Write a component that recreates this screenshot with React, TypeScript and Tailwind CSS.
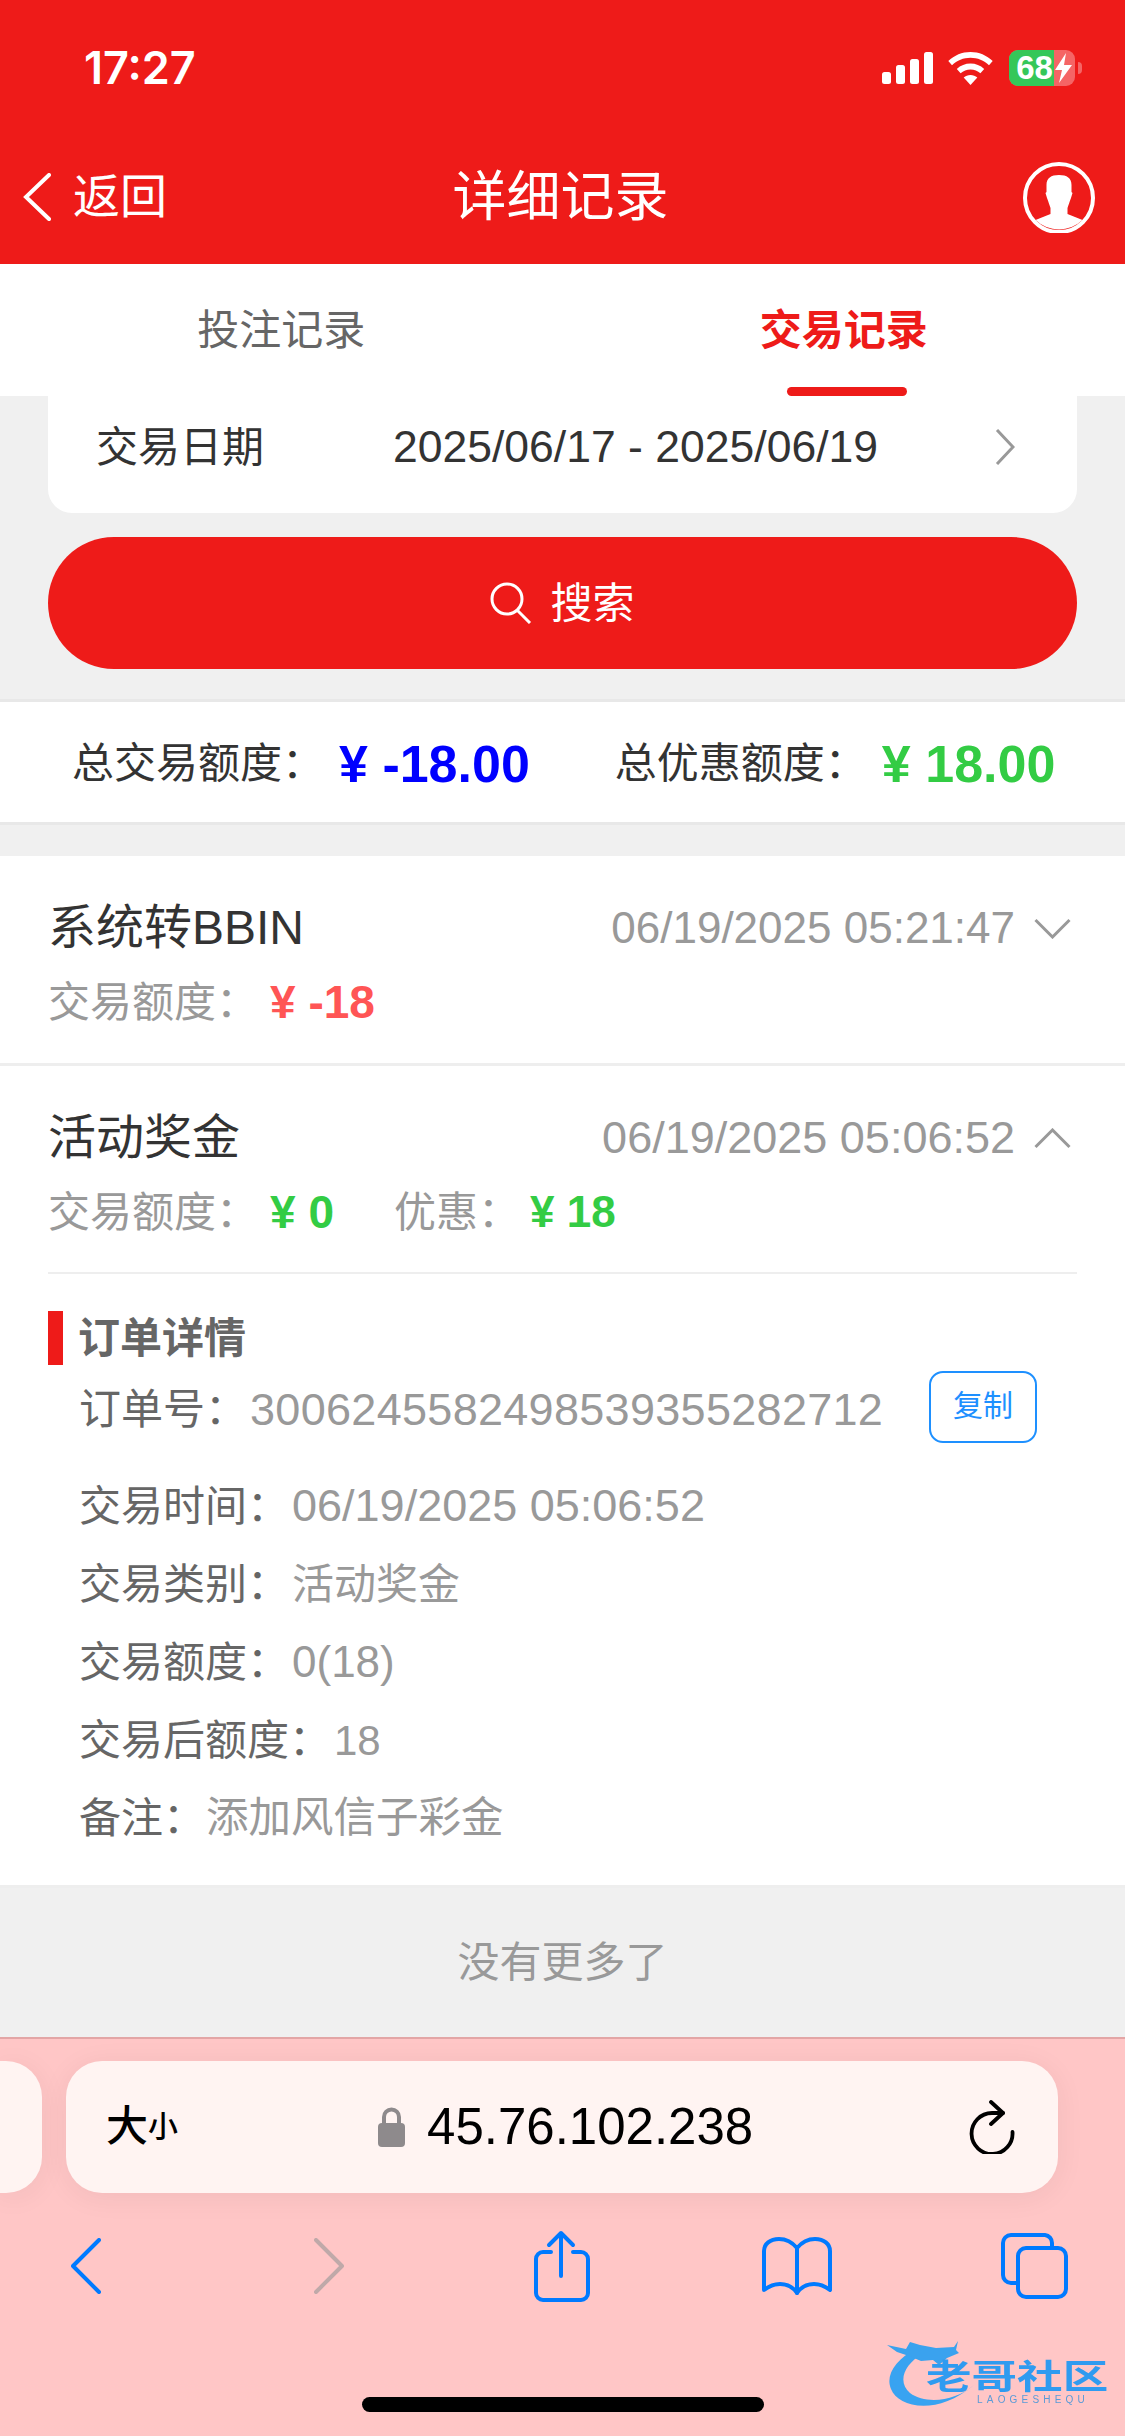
// App.tsx - mobile transaction record page inside the Safari chrome
const details = [
  { label: '交易时间：', value: '06/19/2025 05:06:52', size: 'text-[45px]', gap: 'ml-[3px]' },
  { label: '交易类别：', value: '活动奖金', size: 'text-[42px]', gap: 'ml-[3px]' },
  { label: '交易额度：', value: '0(18)', size: 'text-[44px]', gap: 'ml-[3px]' },
  { label: '交易后额度：', value: '18', size: 'text-[42px]', gap: 'ml-[3px]' },
  { label: '备注：', value: '添加风信子彩金', size: 'text-[42.500px]', gap: 'ml-[1px]' },
];

function StatusIcons() {
  return (
    <div className="flex items-center">
      <svg width="51" height="32" viewBox="0 0 51 32" fill="#fff">
        <rect x="0" y="20" width="9" height="12" rx="2.5" />
        <rect x="14" y="13" width="9" height="19" rx="2.5" />
        <rect x="28" y="7" width="9" height="25" rx="2.5" />
        <rect x="42" y="0" width="9" height="32" rx="2.5" />
      </svg>
      <svg className="ml-[15px]" width="45" height="33" viewBox="0 0 45 33" fill="#fff">
        <path d="M22.5 0C14 0 6.400 3.300 0.300 9l3.700 4.300C9 8.500 15.500 5.800 22.500 5.800s13.500 2.700 18.500 7.500L44.700 9C38.600 3.300 31 0 22.500 0z" />
        <path d="M22.500 11.500c-5.200 0-9.900 2-13.700 5.400l3.800 4.300c2.700-2.400 6.100-3.800 9.900-3.800s7.200 1.400 9.900 3.800l3.800-4.300c-3.800-3.400-8.500-5.400-13.700-5.400z" />
        <path d="M22.500 23c-2.600 0-5 1-6.800 2.600l6.800 7.400 6.800-7.400C27.500 24 25.100 23 22.500 23z" />
      </svg>
      <div className="ml-[16px] flex h-[36px] w-[66px] items-center overflow-hidden rounded-[9px] bg-[#f56565]">
        <div className="flex h-full w-[45px] shrink-0 items-center justify-center bg-[#35c759] pl-[6px] text-[33px] font-bold text-white">
          68
        </div>
        <svg width="21" height="30" viewBox="0 0 21 30" fill="#fff">
          <path d="M12 0 1 17h7l-3 13 13-18h-8z" />
        </svg>
      </div>
      <div className="ml-[3px] h-[12px] w-[4px] rounded-r-[4px] bg-[#f56565]" />
    </div>
  );
}

function Avatar() {
  return (
    <svg width="72" height="71" viewBox="0 0 72 71">
      <circle cx="36" cy="36" r="34" fill="none" stroke="#fff" strokeWidth="4" />
      <path
        fill="#fff"
        d="M36 13c-8 0-12.500 3-12.500 10v7l-1 1 1.500 5c1.500 4 2.500 7 3.500 10v6l-15 6A34 34 0 0 0 59.500 58l-15-6v-6c1-3 2-6 3.500-10l1.500-5-1-1v-7c0-7-4.500-10-12.500-10z"
      />
    </svg>
  );
}

function Chevron({ up }: { up?: boolean }) {
  return (
    <svg width="37" height="21" viewBox="0 0 37 21" fill="none" stroke="#999" strokeWidth="3" className={up ? 'rotate-180' : ''}>
      <path d="M1.500 2 18.500 19 35.500 2" />
    </svg>
  );
}

function Logo() {
  return (
    <div className="absolute right-[17px] top-[296px] h-[76px] w-[222px] blur-[0.7px]">
      <svg className="absolute left-0 top-0" width="100" height="76" viewBox="0 0 100 76" fill="none">
        <path d="M30 14C10 24-1 40 5 54c7 18 45 28 83-4-18 16-48 20-64 8C12 48 16 30 38 18z" fill="#38a3f1" />
        <path d="M1 10l19 4 4-7 10 3 16 3 18-1 4-6-2 9 3 3-12 5-8 7-6-5-12 1-12-5-12-4z" fill="#3aa2ee" />
      </svg>
      <div className="absolute left-[40px] top-[27px] origin-left scale-x-[1.34] whitespace-nowrap text-[34px] font-bold leading-[30px] text-[#2f9bf0]">
        老哥社区
      </div>
      <div className="absolute left-[91px] top-[60px] whitespace-nowrap text-[10px] leading-[10px] tracking-[4.200px] text-[#5a9bd8]">
        LAOGESHEQU
      </div>
    </div>
  );
}

export default function App() {
  return (
    <div className="relative flex h-[2436px] w-[1125px] flex-col overflow-hidden bg-[#f0f0f0] text-[42px] text-[#333] [font-family:'Liberation_Sans','Noto_Sans_CJK_SC',sans-serif]">
      {/* status bar + nav */}
      <header className="h-[264px] bg-[#ee1b19] text-white">
        <div className="flex h-[136px] items-center justify-between pl-[84px] pr-[43px]">
          <span className="text-[45px] font-semibold [font-family:Inter,sans-serif]">17:27</span>
          <StatusIcons />
        </div>
        <div className="grid h-[122px] grid-cols-[1fr_auto_1fr] items-center pl-[23px] pr-[30px]">
          <div className="flex items-center">
            <svg width="28" height="48" viewBox="0 0 28 48" fill="none" stroke="#fff" strokeWidth="4" strokeLinecap="round">
              <path d="M26 2 3 24l23 22" />
            </svg>
            <span className="ml-[22px] text-[47px]">返回</span>
          </div>
          <span className="pl-[3px] text-[54px]">详细记录</span>
          <div className="flex justify-end">
            <Avatar />
          </div>
        </div>
      </header>

      {/* tabs */}
      <div className="flex h-[132px] bg-white">
        <div className="flex flex-1 items-center justify-center text-[#666]">投注记录</div>
        <div className="relative flex flex-1 items-center justify-center font-bold text-[#ee1b19]">
          交易记录
          <div className="absolute bottom-0 left-[224px] h-[9px] w-[120px] rounded-full bg-[#ee1b19]" />
        </div>
      </div>

      {/* date filter and search */}
      <div className="px-[48px]">
        <div className="flex h-[117px] items-center justify-between rounded-b-[24px] bg-white pb-[15px] pl-[48px] pr-[62px]">
          <span>交易日期</span>
          <span className="ml-[12px] text-[44.500px]">2025/06/17 - 2025/06/19</span>
          <svg width="20" height="36" viewBox="0 0 20 36" fill="none" stroke="#999" strokeWidth="3">
            <path d="M2 1l16 17L2 35" />
          </svg>
        </div>
        <button className="mt-[24px] flex h-[132px] w-full items-center justify-center rounded-full bg-[#ee1b19] text-white">
          <svg width="42" height="42" viewBox="0 0 42 42" fill="none" stroke="#fff" strokeWidth="3">
            <circle cx="17" cy="17" r="15" />
            <path d="M27 28l13 13" />
          </svg>
          <span className="ml-[18px]">搜索</span>
        </button>
      </div>

      {/* totals */}
      <div className="mt-[30px] flex h-[126px] items-center border-y-[3px] border-[#e8e8e8] bg-white pl-[72px] pt-[3px]">
        <span>总交易额度：</span>
        <span className="ml-[15px] text-[52px] font-bold text-[#0000ff]">¥ -18.00</span>
        <span className="ml-[85px]">总优惠额度：</span>
        <span className="ml-[15px] text-[52px] font-bold text-[#33cc44]">¥ 18.00</span>
      </div>

      {/* first record */}
      <div className="mt-[31px] h-[210px] border-b-[3px] border-[#eeeeee] bg-white px-[48px] pt-[42px]">
        <div className="flex h-[60px] items-center">
          <span className="text-[48px]">系统转BBIN</span>
          <span className="ml-auto text-[44px] text-[#999]">06/19/2025 05:21:47</span>
          <span className="ml-[19px] mr-[6px]">
            <Chevron />
          </span>
        </div>
        <div className="mt-[14px] flex h-[60px] items-center text-[#999]">
          <span>交易额度：</span>
          <span className="ml-[12px] text-[46px] font-bold text-[#ff5555]">¥ -18</span>
        </div>
      </div>

      {/* second record, expanded */}
      <div className="border-b-[3px] border-[#eeeeee] bg-white px-[48px] pt-[42px] pb-[28px]">
        <div className="flex h-[60px] items-center">
          <span className="text-[48px]">活动奖金</span>
          <span className="ml-auto text-[45px] text-[#999]">06/19/2025 05:06:52</span>
          <span className="ml-[19px] mr-[6px]">
            <Chevron up />
          </span>
        </div>
        <div className="mt-[14px] flex h-[60px] items-center text-[#999]">
          <span>交易额度：</span>
          <span className="ml-[12px] text-[46px] font-bold text-[#33cc44]">¥ 0</span>
          <span className="ml-[60px]">优惠：</span>
          <span className="ml-[10px] text-[44px] font-bold text-[#33cc44]">¥ 18</span>
        </div>
        <div className="mt-[30px] h-[2px] bg-[#eeeeee]" />

        <div className="mt-[37px] flex h-[54px] items-center border-l-[15px] border-[#ee1b19] pl-[15px] font-bold text-[#666]">
          订单详情
        </div>

        <div className="mt-[6px] flex pl-[31px] pr-[40px]">
          <span className="leading-[78px] text-[#666]">订单号：</span>
          <span className="ml-[3px] text-[45px] leading-[78px] tracking-[0.300px] text-[#999]">3006245582498539355282712</span>
          <button className="ml-auto flex h-[72px] w-[108px] items-center justify-center rounded-[14px] border-2 border-[#1e90ff] pb-[3px] text-[30px] text-[#1e90ff]">
            复制
          </button>
        </div>

        <div className="mt-[18px] pl-[31px]">
          {details.map((row) => (
            <div key={row.label} className="flex h-[78px] items-center">
              <span className="text-[#666]">{row.label}</span>
              <span className={`${row.gap} ${row.size} text-[#999]`}>{row.value}</span>
            </div>
          ))}
        </div>
      </div>

      <div className="flex flex-1 items-center justify-center text-[#999]">没有更多了</div>

      {/* Safari toolbar */}
      <div className="relative h-[399px] border-t-2 border-[#e3a6a6] bg-[#ffc6c6] pt-[22px]">
        <div className="flex h-[132px]">
          <div className="w-[42px] rounded-r-[36px] bg-[#fff4f2] shadow-[0_4px_30px_rgba(0,0,0,0.06)]" />
          <div className="ml-[24px] flex w-[992px] items-center rounded-[36px] bg-[#fff4f2] pl-[40px] pr-[43px] text-black shadow-[0_4px_30px_rgba(0,0,0,0.06)]">
            <span className="text-[42px] font-medium leading-none">大</span>
            <span className="text-[30px] font-medium leading-none">小</span>
            <svg className="ml-[200px]" width="27" height="40" viewBox="0 0 27 40">
              <path d="M6 18v-8a7.500 7.500 0 0 1 15 0v8" fill="none" stroke="#8e8a8c" strokeWidth="4" />
              <rect x="0" y="16" width="27" height="24" rx="4" fill="#8e8a8c" />
            </svg>
            <span className="ml-[22px] text-[51px]">45.76.102.238</span>
            <svg className="ml-auto" width="46" height="54" viewBox="0 0 46 54" fill="none" stroke="#000" strokeWidth="3.800" strokeLinecap="round" strokeLinejoin="round">
              <path d="M34 13H23A20.500 20.500 0 1 0 43.500 32" />
              <path d="M22 2l12 11-12 11" />
            </svg>
          </div>
        </div>

        <div className="mt-[37px] flex h-[72px] items-center justify-between pl-[36px] pr-[41px]">
          <div className="flex w-[100px] justify-center">
            <svg width="30" height="56" viewBox="0 0 30 56" fill="none" stroke="#007aff" strokeWidth="4" strokeLinecap="round" strokeLinejoin="round">
              <path d="M28 2 2 28l26 26" />
            </svg>
          </div>
          <div className="flex w-[100px] justify-center pl-[12px]">
            <svg width="30" height="56" viewBox="0 0 30 56" fill="none" stroke="#bfa9a9" strokeWidth="4" strokeLinecap="round" strokeLinejoin="round">
              <path d="M2 2l26 26L2 54" />
            </svg>
          </div>
          <div className="flex w-[100px] justify-center pl-[3px]">
            <svg width="57" height="72" viewBox="0 0 57 72" fill="none" stroke="#007aff" strokeWidth="4" strokeLinecap="round" strokeLinejoin="round">
              <path d="M18 22H10a7 7 0 0 0-7 7v34a7 7 0 0 0 7 7h38a7 7 0 0 0 7-7V29a7 7 0 0 0-7-7h-8" />
              <path d="M28 46V3M16 15 28 3l12 12" />
            </svg>
          </div>
          <div className="flex w-[100px] justify-center">
            <svg width="70" height="60" viewBox="0 0 70 60" fill="none" stroke="#007aff" strokeWidth="4" strokeLinecap="round" strokeLinejoin="round">
              <path d="M35 12C30 6 24 3 17 3 8 3 2 8 2 15v39c5-4 10-6 16-6 7 0 13 3 17 9 4-6 10-9 17-9 6 0 11 2 16 6V15c0-7-6-12-15-12-7 0-13 3-18 9z" />
              <path d="M35 12v45" />
            </svg>
          </div>
          <div className="flex w-[100px] justify-center">
            <svg width="67" height="66" viewBox="0 0 67 66" fill="none" stroke="#007aff" strokeWidth="4">
              <path d="M16 50H10a8 8 0 0 1-8-8V10a8 8 0 0 1 8-8h34a8 8 0 0 1 7 8v5" />
              <rect x="17" y="15" width="48" height="49" rx="8" />
            </svg>
          </div>
        </div>

        <div className="ml-[362px] mt-[95px] h-[15px] w-[402px] rounded-full bg-black" />
        <Logo />
      </div>
    </div>
  );
}
